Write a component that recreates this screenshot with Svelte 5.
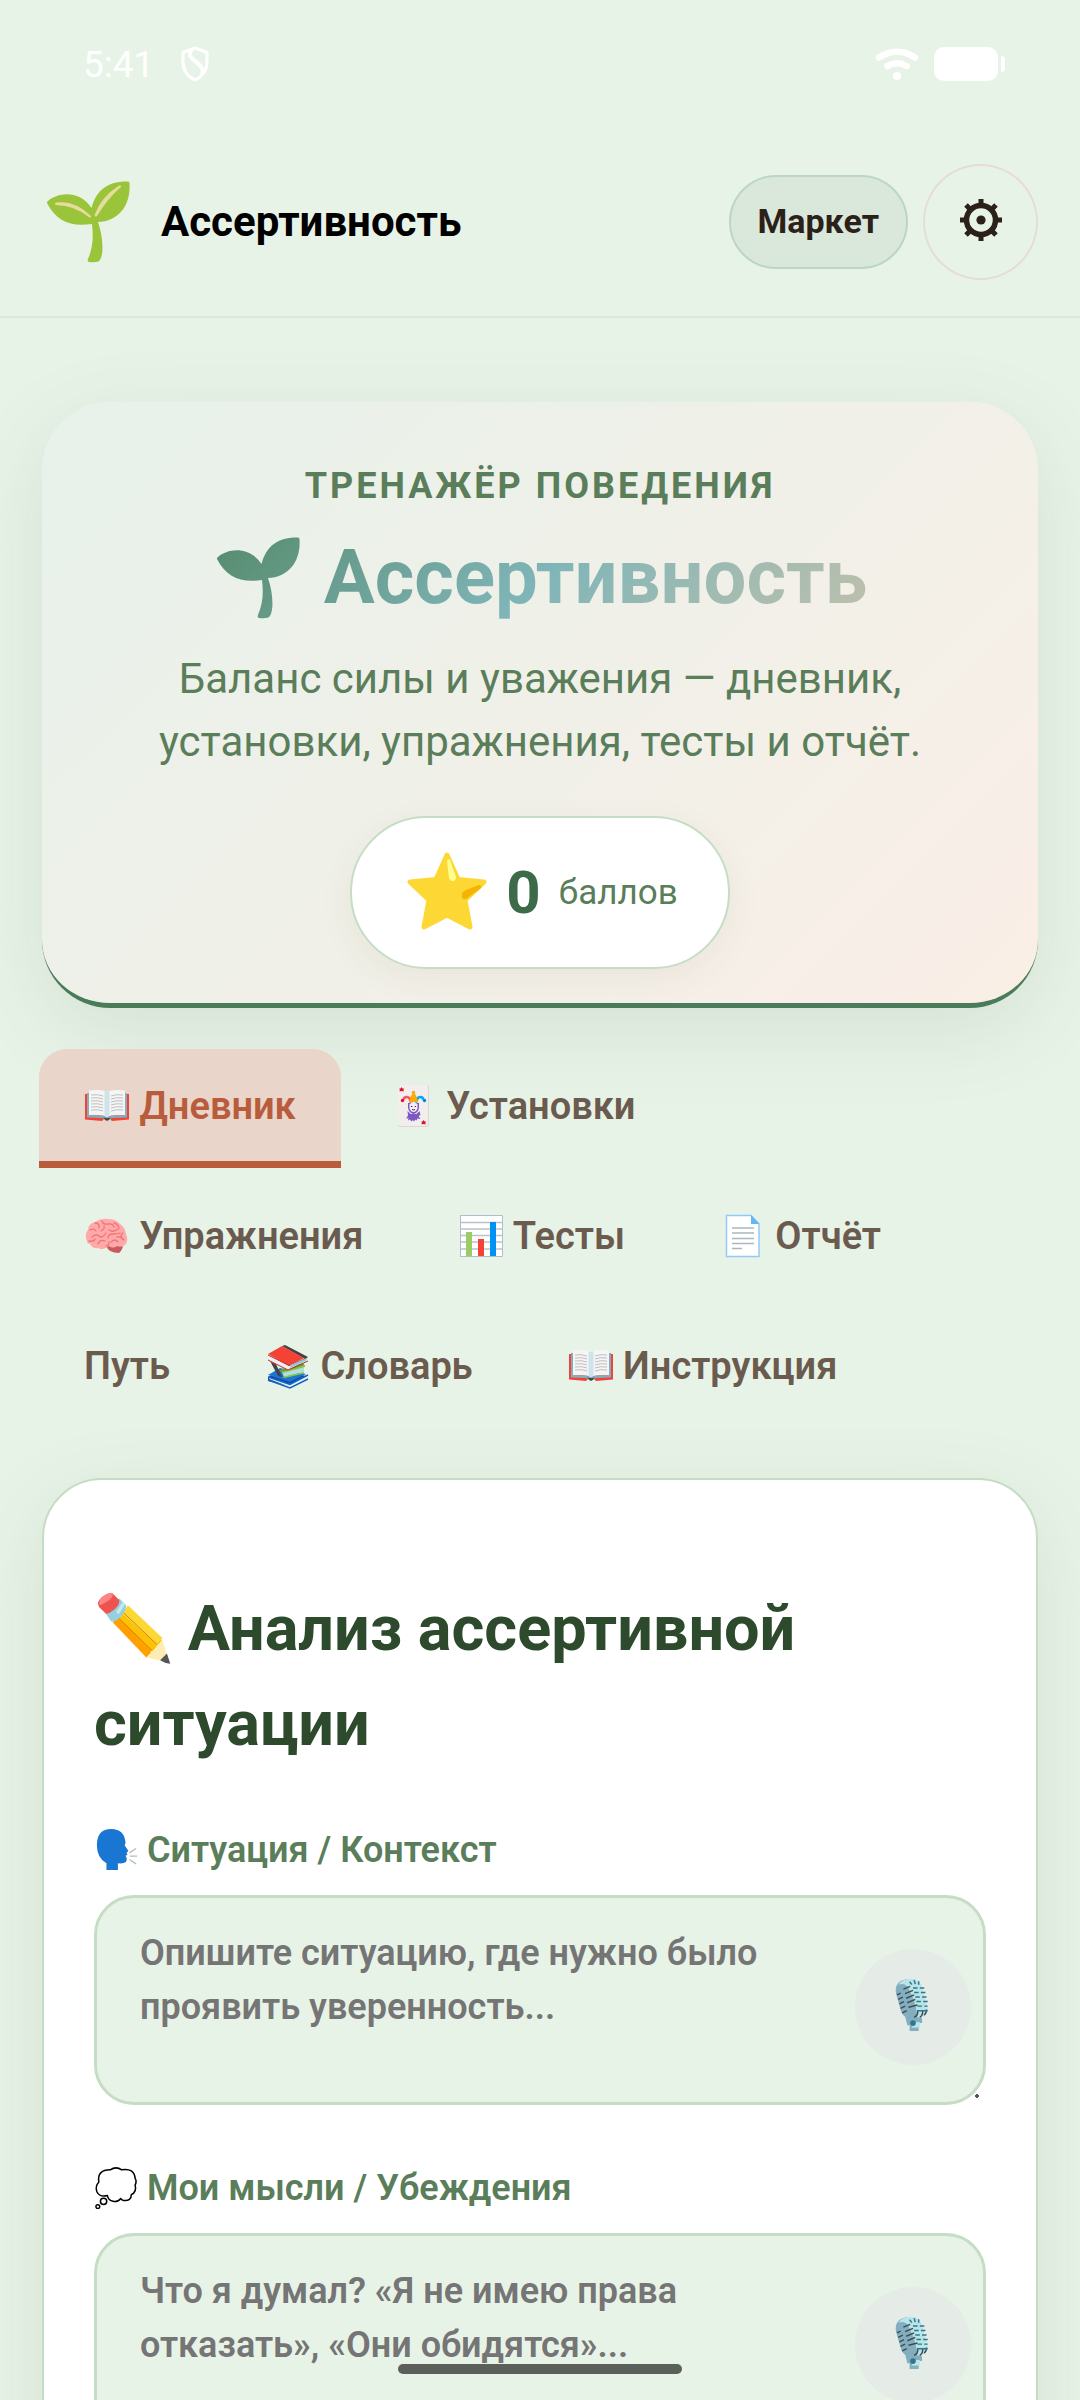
<script>
    let active = "diary";

    const tabs = [
        { id: "diary", icon: "book", label: "Дневник" },
        { id: "cards", icon: "joker", label: "Установки" },
        { id: "exercises", icon: "brain", label: "Упражнения" },
        { id: "tests", icon: "chart", label: "Тесты" },
        { id: "report", icon: "page", label: "Отчёт" },
        { id: "path", icon: null, label: "Путь" },
        { id: "dictionary", icon: "books", label: "Словарь" },
        { id: "manual", icon: "book", label: "Инструкция" },
    ];

    let fields = [
        {
            id: "situation",
            icon: "speaking",
            label: "Ситуация / Контекст",
            placeholder: "Опишите ситуацию, где нужно было проявить уверенность...",
            value: "",
        },
        {
            id: "thoughts",
            icon: "thought",
            label: "Мои мысли / Убеждения",
            placeholder: "Что я думал? «Я не имею права отказать», «Они обидятся»...",
            value: "",
        },
    ];
</script>

{#snippet sproutShape()}
    <path d="M1 20C10 12 32 8 44.500 27C49 10 60 0 81 .5Q82.500 .5 82.500 2C84 24 72 40 51 41C56 56 57 72 53 79Q51 82 42 81Q40 80.500 41 78C46 66 46.500 56 45 43C24 46 10 41 0 22Q-.3 21 1 20Z" />
{/snippet}

{#snippet icon(name)}
    <svg class="icon" viewBox="0 0 46 46" aria-hidden="true">
        {#if name === "book"}
            <path fill="#f44336" d="M1 11h4v21l15 .5 3 2 3-2 15-.5V11h4v25.500l-17 1.500-2-2h-6l-2 2-17-1.500z" />
            <path fill="#82aec0" d="M3 10h2v22l15 .5 3 2 3-2 15-.5V10h2v24.500l-15 .5-5 3-5-3-15-.5z" />
            <path fill="#424242" d="M19 34.500q4 1.500 8 0l-3 3h-2z" />
            <path fill="#f5f5f5" d="M5 7.500q13-1.500 18 1.500 5-3 18-1.500V32q-13-1-18 2-5-3-18-2z" />
            <path fill="#cfe3ea" d="M20.500 8.300 23 9l2.500-.7V32.500L23 34l-2.500-1.500z" />
            <path fill="none" stroke="#b0b0b0" stroke-width=".8" d="M7 12q7-1 12 1M7 15q7-1 12 1M7 18q7-1 12 1M7 21q7-1 12 1M7 24q7-1 12 1M7 27q7-1 12 1M39 12q-7-1-12 1M39 15q-7-1-12 1M39 18q-7-1-12 1M39 21q-7-1-12 1M39 24q-7-1-12 1M39 27q-7-1-12 1" />
        {:else if name === "joker"}
            <rect x="7" y="2" width="31" height="42" rx="2" fill="#e0d5d5" />
            <rect x="7" y="2" width="30" height="41" rx="2" fill="#f3eeee" />
            <path fill="#dd0f2d" d="m10.500 4 1 1.500h1.600l-.8 1.500.6 1.500-2.400-.5-2 .5.4-1.700-.7-1.300h1.500zM32.500 37l1 1.500h1.600l-.8 1.500.6 1.500-2.400-.5-2 .5.4-1.700-.7-1.300h1.500z" />
            <path fill="#7e57c2" d="m16.500 28 3 3h6l3-3 1 4-2 1 2 3-3-.5-1 2-1-1-1.500 2-1-1.500-1.500 1.500-1.500-2-2 1 .5-2.500-2.500 .5 2-3z" />
            <path fill="#7e57c2" d="M17 20h11v5q-1 5-5.500 6-4.500-1-5.500-6z" />
            <path fill="#ff5264" d="M19 20q-2-7-5-3.500l-3 1q1-6 6-4.500 4 1 5 6z" />
            <path fill="#03a9f4" d="M26 20q2-7 5-3.500l3 1q-1-6-6-4.500-4 1-5 6z" />
            <path fill="#fcab00" d="M18 20q2-9 4.500-10.500Q26 12 27 20q-4.500-3-9 0z" />
            <circle cx="22.500" cy="9.500" r="1.800" fill="#f9a825" />
            <circle cx="11.500" cy="17.500" r="1.700" fill="#dd0f2d" />
            <circle cx="33.500" cy="17.500" r="1.700" fill="#0288d1" />
            <path fill="#f4edf7" d="M18.500 21q4-2.500 8 0v4.500q-1.500 3.500-4 3.500t-4-3.500z" />
            <path fill="none" stroke="#333" d="M20 23.500h1.300M23.800 23.500H25M21 26.500q1.500 1 3 0" />
        {:else if name === "brain"}
            <path fill="#c85a5e" d="M22 32q2 8 13 8 4-3 4-9z" />
            <path fill="#ffaaa8" d="M3 28Q0 22 4 17q0-6 7-8 6-4 13-3 8 0 12 5 5 3 6 10 3 7-1 11-4 3-8 1-4 3-8 0-6 5-11 2-6 1-8-4-3 0-3-3z" />
            <path fill="none" stroke="#ee7478" stroke-width="1.300" stroke-linecap="round" d="M6 17q4-2 6 1M11 10q5 0 4 5M18 8q1 4 6 3t6 3M8 24q4-4 7-1t7-3M17 18q4-2 3-5M25 17q4 3 9-1M30 10q4 1 5 5M5 28q5 1 6-2M14 31q2-5 7-3M24 25q0-4 5-4t7-1M27 29q4-4 7 0M39 20q-3 2-1 6M22 33q3 0 3-4M33 24q4-1 7 3" />
        {:else if name === "chart"}
            <path fill="#fff" stroke="#b0bec5" d="M2.500 2.500h42v41h-42z" />
            <path stroke="#b9c4ca" stroke-width="1.300" d="M3 9.500h41M3 16h41M3 22.500h41M3 29h41M3 36h41" />
            <path fill="#9ccc65" d="M8 19h6v24H8z" />
            <path fill="#f44336" d="M20 26h6v17h-6z" />
            <path fill="#0091f2" d="M32 9h6v34h-6z" />
        {:else if name === "page"}
            <path fill="#fff" stroke="#90caf9" stroke-width="1.500" d="M6.500 2.500H31l8 8.500v32.500H6.500z" />
            <path fill="#64b5f6" d="m31 2 8.500 9H31z" />
            <path stroke="#a9b8c0" stroke-width="1.300" d="M12 15h22M12 20h22M12 25.500h22M12 30.500h22M12 35.500h10" />
        {:else if name === "books"}
            <path fill="#0d47a1" d="m3 34 13-7 25 6-17 10L3 38z" />
            <path fill="#e3f5fb" d="m4 34 21 7 18-9-1 4-17 8-21-8z" />
            <path fill="none" stroke="#1565c0" stroke-width="1.500" d="m3 34 22 7.500L43 32M3 37l22 8 18-9" />
            <path fill="#1976d2" d="m3 32 12-7 26 6-16 8z" />
            <path fill="#689f38" d="m14 27 24-7 2 3-21 9z" />
            <path fill="#b2dfdb" d="m17 29 22-5v5l-20 5z" />
            <path fill="#424242" d="m4 16 6 3 7 15-4-1z" />
            <path fill="#8bc34a" d="m17 29 23-7v2l-22 6zM17 34l22-5v1.500L20 35z" />
            <path fill="#eeeff0" d="m3 11 20 9 20-8-1 5-19 10-19-9z" />
            <path fill="#424242" d="m17 3 3-1 23 12-3 2z" />
            <path fill="#f44336" d="m3 11 14-8 22 12-15 8z" />
            <path fill="none" stroke="#c62828" d="m3 12 21 10.500L42 15M3 17l20 10 20-9" />
            <path fill="#90c7dc" d="m25 22 17-7-1 3-16 7z" />
        {:else if name === "speaking"}
            <path fill="#1976d2" d="M13 45v-7Q3 32 3 19 3 2 18 2q14 0 15 15l-1 2 4 6-2 2 1 2-2 1 1 2q2 7-9 6v7z" />
            <path stroke="#b0bec5" stroke-width="1.400" d="m37 27 7-4.500M37.500 30.500H45M37 34l7 4.500" />
        {:else if name === "thought"}
            <path fill="#fff" stroke="#000" stroke-width="1.600" stroke-linejoin="round" d="M5 18q-2-13 12-13 6-4 12 0 13-2 14 9 2 3 0 7 2 7-4 10 0 7-8 6-2 0-3-2-3 4-8 3-5-1-6-6-8 2-11-4-2-6 2-10z" />
            <circle cx="10" cy="38" r="3.300" fill="#fff" stroke="#000" stroke-width="1.600" />
            <circle cx="4" cy="43.500" r="2" fill="#fff" stroke="#000" stroke-width="1.500" />
        {:else if name === "pencil"}
            <path fill="#ffc107" d="m13.500 17 6-6L40 30l-7 8z" />
            <path fill="#fdd835" d="m16.500 14 3.500-5 20.500 19.500-3.500 3.500z" />
            <path fill="#ffa000" d="m11 19 3-3 20 20-3 4z" />
            <path fill="none" stroke="#c77800" stroke-width=".5" d="m14 16 20.500 20M17 13l20.500 19.500" />
            <path fill="#ffecb3" d="M30.500 39.500q3 0 3-3.500 4 0 3.500-3.500 3.500-.5 3-4l4.500 14.500z" />
            <path fill="#555" d="m39 41.500 4-4 2 6q-3 0-6-2z" />
            <path fill="#94d1e0" d="m7 14 8-9 4 4q0 3-3 6.500T10 18.500z" />
            <path fill="#c5e9ef" d="m13 13 4-6 1.500 1-4 6.500z" />
            <path fill="#ef5350" d="M3 10Q1 7 5 4t6-2l4 4q0 3-3 5.500T7 14z" />
            <path fill="#ff8484" d="M3 8q0-3 3.500-5T11 2q1 3-7.500 7z" />
        {:else if name === "mic"}
            <path fill="#82aec0" d="m16 33 9-2 6 4v4h-3v7h-8v-5h-2z" />
            <path fill="#b9e4ea" d="M22 38h7v5h-7z" />
            <path fill="#82aec0" d="M8 13Q6 2 18 0l9 3 6 22q2 8-7 9h-9q-4-2-5-7z" />
            <path fill="#b9e4ea" d="M18 0q10-2 13 7l5 20q0 5-6 7h-3q-1-8-3-15L19 8q-3-5-9-3 3-4 8-5z" />
            <path fill="none" stroke="#424c50" stroke-width="1.300" d="m9 14 3-1.500M10 18l4-2M11 22l4-2M12 26l4-2M13.500 30l4-2M14.500 9l6-2.500M16 13l7-3M17 17l7-3M18 21l7-3M19 25l8-2M24 34q4-2 3-6M29 34q3-2 2.500-6M33 32q2-2 2-5" />
            <path fill="none" stroke="#2f7889" stroke-width="1.300" d="M20 2.500 22 5M24 1l1 3.500M28 2v3M23 8h4M29 8h4M24 12h4M30 12h4M25 16h4M31 16h4M26 20h4M32 20h4M27 24h4M33 24h3M26.500 28H36" />
            <circle cx="23" cy="39" r="2.500" fill="#2f7889" />
        {/if}
    </svg>
{/snippet}

<div class="screen">
    <div class="status-bar">
        <div class="status-left">
            <span>5:41</span>
            <svg width="30" height="36" viewBox="0 0 30 36" fill="none" stroke="#fff" stroke-width="3" stroke-linejoin="round" aria-hidden="true">
                <path d="M15 2 27 6.500V16c0 8-4 14-12 18C7 30 3 24 3 16V6.500z" />
                <path d="M12 3c-4 5-2 8 3 12 6 5 9 7 7 13" stroke-width="4" />
            </svg>
        </div>
        <div class="status-right">
            <svg width="44" height="34" viewBox="0 0 44 34" fill="none" stroke="#fff" stroke-width="6.500" stroke-linecap="round" aria-hidden="true">
                <path d="M4 10.500Q22-1 40 10.500M12.500 19Q22 13.500 31.500 19" />
                <circle cx="22" cy="29" r="4" fill="#fff" stroke="none" />
            </svg>
            <svg width="71" height="34" viewBox="0 0 71 34" fill="#fff" aria-hidden="true">
                <rect width="64" height="34" rx="10" />
                <path d="M67 9q4 0 4 4v8q0 4-4 4z" />
            </svg>
        </div>
    </div>

    <header>
        <svg class="logo" viewBox="-5 -4 90 90" aria-hidden="true">
            <g fill="#9ac43a">{@render sproutShape()}</g>
            <path fill="#e6dc9c" d="M9 21.500Q28 19 44 35q.5 2-1.500 1.500Q28 24.500 9 24q-2-1 0-2.500zM47.500 34Q54 16 72 4.500q3-.5 2 1.500-13 11-24 29-2 1.500-2.500-1z" />
        </svg>
        <span class="brand">Ассертивность</span>
        <button class="market" type="button">Маркет</button>
        <button class="settings" type="button" aria-label="Настройки">
            <svg width="42" height="42" viewBox="0 0 42 42" fill="none" stroke="#2c2118" aria-hidden="true">
                <path stroke-width="5" d="M21 0v7M21 35v7M0 21h7M35 21h7M6 6l5 5M31 31l5 5M6 36l5-5M31 11l5-5" />
                <circle cx="21" cy="21" r="14.500" stroke-width="5.500" />
                <circle cx="21" cy="21" r="4.600" fill="#2c2118" stroke="none" />
            </svg>
        </button>
    </header>

    <main>
        <section class="hero">
            <p class="eyebrow">Тренажёр поведения</p>
            <h1>
                <svg class="title-sprout" viewBox="-4 -4 92 90" aria-hidden="true">
                    <defs>
                        <linearGradient id="sprout" x1="0" y1="0" x2="1" y2="1">
                            <stop offset="0" stop-color="#568b6e" />
                            <stop offset="1" stop-color="#699f8e" />
                        </linearGradient>
                    </defs>
                    <g fill="url(#sprout)">{@render sproutShape()}</g>
                </svg>
                Ассертивность
            </h1>
            <p class="lead">Баланс силы и уважения — дневник, установки, упражнения, тесты и отчёт.</p>
            <div class="points">
                <svg width="84" height="84" viewBox="0 0 84 84" aria-hidden="true">
                    <path fill="#fdd835" stroke="#fdd835" stroke-width="5" stroke-linejoin="round" d="M43 4 54 28.500 80 31 61 49 66 76 43 64 20 76 25 49 6 31 32 28.500z" />
                    <path fill="#ffff8d" d="M43 10q1-3 3-1l6 17q0 4-3 4t-4-3z" />
                    <path fill="#f4b400" d="M58 45q-1-4 4-6l13-5q3 0 2 3L62 48q-4 1-4-3z" />
                </svg>
                <strong>0</strong>
                <span>баллов</span>
            </div>
        </section>

        <nav class="tabs">
            {#each tabs as tab}
                <button type="button" class="tab" class:active={active === tab.id} on:click={() => (active = tab.id)}>
                    {#if tab.icon}{@render icon(tab.icon)}{/if}
                    {tab.label}
                </button>
            {/each}
        </nav>

        <section class="card">
            <h2>{@render icon("pencil")} Анализ ассертивной ситуации</h2>
            {#each fields as field}
                <div class="form-group">
                    <label for={field.id}>{@render icon(field.icon)} {field.label}</label>
                    <div class="input-wrap">
                        <textarea id={field.id} bind:value={field.value} placeholder={field.placeholder}></textarea>
                        <button class="mic" type="button" aria-label="Голосовой ввод">{@render icon("mic")}</button>
                    </div>
                </div>
            {/each}
        </section>
    </main>

    <div class="home-bar"></div>
</div>

<style>
    :global(body) {
        background: #e8f3e7;
    }

    .screen {
        position: relative;
        height: 100vh;
        overflow: hidden;
        background: #e8f3e7;
        font-family: Roboto, "Noto Sans", sans-serif;
        color: #2c2118;
    }

    button {
        font-family: inherit;
        color: inherit;
        cursor: pointer;
    }

    svg {
        flex: none;
    }

    .status-bar {
        display: flex;
        justify-content: space-between;
        align-items: center;
        height: 128px;
        padding: 0 75px 0 83px;
        box-sizing: border-box;
        color: #fff;
        font-size: 37px;
    }

    .status-left {
        display: flex;
        align-items: center;
        gap: 26px;
    }

    .status-right {
        display: flex;
        align-items: center;
        gap: 15px;
    }

    header {
        display: flex;
        align-items: center;
        gap: 15px;
        padding: 36px 42px;
        border-bottom: 2px solid #dbe6e0;
    }

    .logo {
        width: 90px;
        height: 90px;
    }

    .brand {
        flex: 1;
        padding: 0 0 2px 14px;
        font-size: 42px;
        font-weight: 700;
        color: #000;
    }

    .market {
        height: 94px;
        padding: 0 27px 2px;
        border: 2px solid #bbd6c6;
        border-radius: 47px;
        background: #dae8db;
        font-size: 34px;
        font-weight: 700;
    }

    .settings {
        display: flex;
        align-items: center;
        justify-content: center;
        width: 115px;
        height: 116px;
        padding: 0 0 4px;
        border: 2px solid #e6dcd6;
        border-radius: 50%;
        background: none;
    }

    main {
        padding: 84px 42px 0;
    }

    .hero {
        display: flex;
        flex-direction: column;
        align-items: center;
        padding: 58px 50px 34px;
        border-bottom: 5px solid #4a7c59;
        border-radius: 68px;
        background: linear-gradient(135deg, #e7f2eb 0%, #f0f0e8 50%, #f4f0e8 70%, #f8eee8 88%, #faefe4 100%);
        box-shadow: 0 22px 84px rgba(45, 74, 50, 0.1);
        text-align: center;
    }

    .eyebrow {
        margin: 0 0 19px;
        font-size: 36px;
        line-height: 52px;
        font-weight: 700;
        letter-spacing: 3px;
        text-transform: uppercase;
        color: #5a7d5a;
    }

    h1 {
        width: 100%;
        margin: 0 0 24px;
        font-size: 76px;
        line-height: 92px;
        font-weight: 700;
        background: linear-gradient(135deg, #4a7c59 0%, #7fb5b8 50%, #d4c4a8 100%);
        -webkit-background-clip: text;
        background-clip: text;
        color: transparent;
    }

    .title-sprout {
        width: 92px;
        height: 90px;
        vertical-align: -20px;
    }

    .lead {
        margin: 0 0 43px;
        font-size: 42px;
        line-height: 63px;
        color: #5a7d5a;
    }

    .points {
        display: flex;
        align-items: center;
        gap: 18px;
        height: 149px;
        padding: 0 50px 0 52px;
        border: 2px solid #c5ddc5;
        border-radius: 77px;
        background: #fff;
        box-shadow: 0 10px 36px rgba(74, 60, 40, 0.06);
    }

    .points strong {
        font-size: 60px;
        color: #3d6b4a;
    }

    .points span {
        font-size: 35px;
        color: #5a7d5a;
    }

    .tabs {
        display: flex;
        flex-wrap: wrap;
        gap: 11px 5px;
        margin: 41px -3px 50px;
    }

    .tab {
        padding: 29px 45px 27px;
        border: 0;
        border-bottom: 7px solid transparent;
        border-radius: 28px 28px 0 0;
        background: none;
        font-size: 38px;
        line-height: 56px;
        font-weight: 600;
        color: #6b5b4f;
    }

    .tab.active {
        border-color: #b85c3c;
        background: #e9d5ca;
        color: #b85c3c;
    }

    .tab .icon {
        width: 46px;
        height: 46px;
        vertical-align: -10px;
    }

    .card {
        padding: 101px 50px 60px;
        border: 2px solid #c5ddc5;
        border-radius: 60px;
        background: #fff;
        box-shadow: 0 22px 84px rgba(45, 74, 50, 0.1);
    }

    h2 {
        margin: 0 0 53px;
        font-size: 63px;
        line-height: 95px;
        font-weight: 700;
        color: #2d4a2d;
    }

    h2 .icon {
        width: 78px;
        height: 78px;
        vertical-align: -18px;
    }

    .form-group {
        margin-bottom: 57px;
    }

    label {
        display: block;
        margin-bottom: 19px;
        font-size: 36px;
        line-height: 52px;
        font-weight: 600;
        color: #5a7d5a;
    }

    label .icon {
        width: 44px;
        height: 44px;
        vertical-align: -9px;
    }

    .input-wrap {
        position: relative;
    }

    textarea {
        display: block;
        width: 100%;
        height: 210px;
        padding: 28px 150px 28px 43px;
        border: 3px solid #c5ddc5;
        border-radius: 40px;
        box-sizing: border-box;
        background: #e8f3e7;
        font-family: inherit;
        font-size: 36px;
        line-height: 54px;
        font-weight: 600;
        resize: vertical;
    }

    textarea::placeholder {
        color: #757575;
        opacity: 1;
    }

    /* the grip is only a small dot in the corner */
    textarea::-webkit-resizer {
        background: radial-gradient(circle at 9px 9px, #555 2px, transparent 2px);
    }

    /* microphone lies over the right side of the text box */
    .mic {
        position: absolute;
        top: 54px;
        right: 15px;
        display: flex;
        align-items: center;
        justify-content: center;
        width: 116px;
        height: 116px;
        padding: 0 0 4px;
        border: 0;
        border-radius: 50%;
        background: #e5ebe7;
    }

    .mic .icon {
        width: 52px;
        height: 52px;
    }

    .home-bar {
        position: absolute;
        bottom: 26px;
        left: 50%;
        width: 284px;
        height: 10px;
        margin-left: -142px;
        border-radius: 5px;
        background: #5b605b;
    }
</style>
